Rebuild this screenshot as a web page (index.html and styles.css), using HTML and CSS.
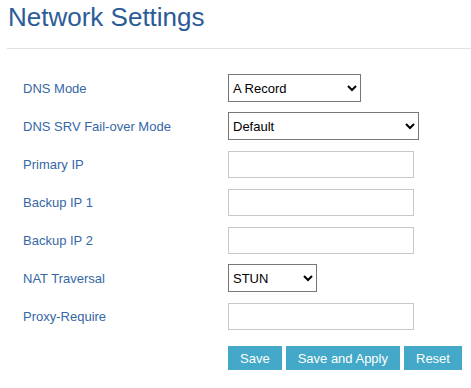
FILE: index.html
```html
<!DOCTYPE html>
<html>
<head>
<meta charset="utf-8">
<title>Network Settings</title>
<link rel="stylesheet" href="styles.css">
</head>
<body>
<h1 class="title">Network Settings</h1>
<hr class="rule">
<form class="form">
  <label class="label">DNS Mode</label>
  <div class="ctl"><select class="sel sel-mode"><option>A Record</option></select></div>
  <label class="label">DNS SRV Fail-over Mode</label>
  <div class="ctl"><select class="sel sel-srv"><option>Default</option></select></div>
  <label class="label">Primary IP</label>
  <div class="ctl"><input class="inp" type="text"></div>
  <label class="label">Backup IP 1</label>
  <div class="ctl"><input class="inp" type="text"></div>
  <label class="label">Backup IP 2</label>
  <div class="ctl"><input class="inp" type="text"></div>
  <label class="label">NAT Traversal</label>
  <div class="ctl"><select class="sel sel-nat"><option>STUN</option></select></div>
  <label class="label">Proxy-Require</label>
  <div class="ctl"><input class="inp" type="text"></div>
  <div class="buttons">
    <button type="button" class="btn">Save</button>
    <button type="button" class="btn">Save and Apply</button>
    <button type="button" class="btn">Reset</button>
  </div>
</form>
</body>
</html>
```
FILE: styles.css
```css
html, body {
  margin: 0;
  padding: 0;
  background: #ffffff;
  font-family: "Liberation Sans", Arial, sans-serif;
}
.title {
  margin: 3px 0 0 8px;
  font-size: 26px;
  line-height: 28px;
  font-weight: normal;
  color: #2b5c98;
}
.rule {
  margin: 17px 0 0 7px;
  border: 0;
  border-top: 1px solid #e2e2e2;
  height: 0;
}
.form {
  display: grid;
  grid-template-columns: 205px 1fr;
  grid-auto-rows: 38px;
  align-items: center;
  margin: 20px 0 0 23px;
}
.label {
  font-size: 13px;
  color: #3567a6;
}
.ctl {
  display: flex;
  align-items: center;
}
.sel {
  font-family: "Liberation Sans", Arial, sans-serif;
  font-size: 13px;
  color: #000;
  height: 28px;
  border: 1px solid #767676;
  border-radius: 0;
  background: #fff;
  margin: 0;
}
.sel-mode { width: 133px; }
.sel-srv { width: 191px; }
.sel-nat { width: 89px; }
.inp {
  box-sizing: border-box;
  width: 186px;
  height: 27px;
  margin: 0;
  border: 1px solid #c8c8c8;
  padding: 2px 4px;
  font-family: "Liberation Sans", Arial, sans-serif;
  font-size: 13px;
}
.buttons {
  grid-column: 2;
  display: flex;
  gap: 4px;
  margin-top: 11px;
  align-self: start;
}
.btn {
  height: 24px;
  padding: 0 12px;
  border: 0;
  border-radius: 0;
  background: #44a8c8;
  color: #ffffff;
  font-family: "Liberation Sans", Arial, sans-serif;
  font-size: 13px;
  cursor: pointer;
}
```
